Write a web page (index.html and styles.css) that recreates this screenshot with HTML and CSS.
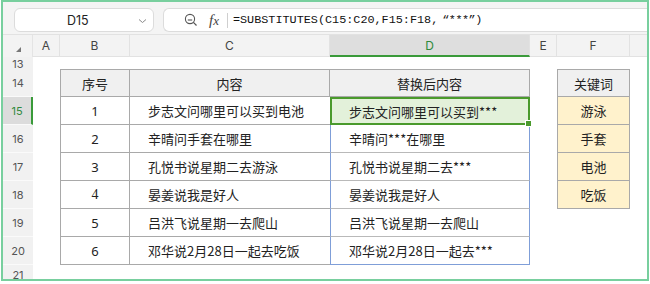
FILE: index.html
```html
<html>
  <head>
    <title>SUBSTITUTES</title>
    <link rel="stylesheet" href="styles.css">
  </head>
  <body>
    <div class="frame">
      <div class="toolbar">
        <div class="namebox">
          <span class="ref">D15</span>
          <svg class="chevron" width="9" height="6" viewBox="0 0 9 6">
            <path d="M1 1.5 L4.5 4.5 L8 1.5" fill="none" stroke="#8a8a8a" stroke-width="1"/>
          </svg>
        </div>
        <div class="formula">
          <svg class="zoomicon" width="14" height="14" viewBox="0 0 14 14">
            <circle cx="6" cy="6" r="4.6" fill="none" stroke="#555" stroke-width="1.1"/>
            <path d="M3.8 7 H8.2" stroke="#555" stroke-width="1.1"/>
            <path d="M9.4 9.4 L12.5 12.5" stroke="#555" stroke-width="1.2"/>
          </svg>
          <span class="fx">f<i>x</i></span>
          <span class="sep"></span>
          <span class="expr">=SUBSTITUTES(C15:C20,F15:F18,<span class="q">“***”</span>)</span>
        </div>
      </div>

      <div class="sheet">
        <div class="row colhead">
          <div class="corner"><span class="tri"></span></div>
          <div class="ch">A</div>
          <div class="ch">B</div>
          <div class="ch">C</div>
          <div class="ch active">D</div>
          <div class="ch">E</div>
          <div class="ch">F</div>
          <div class="ch last"></div>
        </div>

        <div class="row short">
          <div class="rh">13</div>
          <div></div><div></div><div></div><div></div><div></div><div></div><div></div>
        </div>

        <div class="row">
          <div class="rh">14</div>
          <div></div>
          <div class="cell th b top">序号</div>
          <div class="cell th top">内容</div>
          <div class="cell th top">替换后内容</div>
          <div></div>
          <div class="cell th f top">关键词</div>
          <div></div>
        </div>

        <div class="row">
          <div class="rh active">15</div>
          <div></div>
          <div class="cell num b">1</div>
          <div class="cell txt c">步志文问哪里可以买到电池</div>
          <div class="cell txt d sel">步志文问哪里可以买到***<span class="handle"></span></div>
          <div></div>
          <div class="cell key f">游泳</div>
          <div></div>
        </div>

        <div class="row">
          <div class="rh">16</div>
          <div></div>
          <div class="cell num b">2</div>
          <div class="cell txt c">辛晴问手套在哪里</div>
          <div class="cell txt d">辛晴问***在哪里</div>
          <div></div>
          <div class="cell key f">手套</div>
          <div></div>
        </div>

        <div class="row">
          <div class="rh">17</div>
          <div></div>
          <div class="cell num b">3</div>
          <div class="cell txt c">孔悦书说星期二去游泳</div>
          <div class="cell txt d">孔悦书说星期二去***</div>
          <div></div>
          <div class="cell key f">电池</div>
          <div></div>
        </div>

        <div class="row">
          <div class="rh">18</div>
          <div></div>
          <div class="cell num serif b">4</div>
          <div class="cell txt c">晏姜说我是好人</div>
          <div class="cell txt d">晏姜说我是好人</div>
          <div></div>
          <div class="cell key f">吃饭</div>
          <div></div>
        </div>

        <div class="row">
          <div class="rh">19</div>
          <div></div>
          <div class="cell num b">5</div>
          <div class="cell txt c">吕洪飞说星期一去爬山</div>
          <div class="cell txt d">吕洪飞说星期一去爬山</div>
          <div></div><div></div><div></div>
        </div>

        <div class="row">
          <div class="rh">20</div>
          <div></div>
          <div class="cell num b">6</div>
          <div class="cell txt c">邓华说2月28日一起去吃饭</div>
          <div class="cell txt d end">邓华说2月28日一起去***</div>
          <div></div><div></div><div></div>
        </div>

        <div class="row tail">
          <div class="rh">21</div>
          <div></div><div></div><div></div><div></div><div></div><div></div><div></div>
        </div>
      </div>
    </div>
  </body>
</html>
```

FILE: styles.css
```css
body {margin: 0; background: #fff; font-family: "Noto Sans CJK SC", "Noto Sans", sans-serif;}

.frame {
  margin-left: 1px;
  width: 648px;
  height: 281px;
  border: 2px solid #78cf9e;
  box-sizing: border-box;
  overflow: hidden;
  background: #fff;
}

/* name box + formula bar */
.toolbar {
  height: 33px;
  background: #f4f4f4;
  display: flex;
  align-items: center;
  gap: 9px;
  padding: 4px 0 0 11px;
  box-sizing: border-box;
  border-bottom: 1px solid #e2e2e2;
}
.namebox {
  width: 140px;
  height: 24px;
  background: #fff;
  border: 1px solid #dcdcdc;
  border-radius: 6px;
  box-sizing: border-box;
  display: flex;
  align-items: center;
  justify-content: space-between;
  padding: 0 6px 0 52px;
  font-family: Inter, "Noto Sans", sans-serif;
  font-size: 12.5px;
  color: #222;
}
.chevron {margin-top: 1px;}
.formula {
  flex: 1;
  height: 24px;
  background: #fff;
  border: 1px solid #dcdcdc;
  border-right: none;
  border-radius: 6px 0 0 6px;
  box-sizing: border-box;
  display: flex;
  align-items: center;
  padding-left: 20px;
}
.zoomicon {margin-right: 11px;}
.fx {font-family: "Liberation Serif", serif; font-style: italic; font-size: 15px; color: #444; margin-right: 8px;}
.fx i {font-size: 13px;}
.sep {width: 1px; height: 15px; background: #cfcfcf; margin-right: 5px;}
.expr {font-family: "Liberation Mono", monospace; font-size: 11.8px; color: #111;}
.expr .q {margin-left: 4px; letter-spacing: -0.5px;}

/* grid */
.row {
  display: grid;
  grid-template-columns: 30px 27px 70px 200px 200px 27px 73px 1fr;
  height: 28px;
}
.row.short {height: 12px;}
.row.tail {height: 20px;}
.row.colhead {height: 22px; background: #f3f3f3;}

.corner {position: relative; border-right: 1px solid #e4e4e4;}
.tri {
  position: absolute;
  right: 11px;
  bottom: 5px;
  width: 0;
  height: 0;
  border-left: 5px solid transparent;
  border-bottom: 5px solid #777;
}
.ch {
  display: flex;
  align-items: center;
  justify-content: center;
  font-family: Inter, "Noto Sans", sans-serif;
  font-size: 12px;
  color: #444;
  border-right: 1px solid #e2e2e2;
  border-bottom: 1px solid #e2e2e2;
}
.ch.last {border-right: none;}
.ch.active {background: #dedede; color: #2f8a3c; border-bottom: 2px solid #3a9a3a;}

.rh {
  background: #f1f1f1;
  border-bottom: 1px solid #fafafa;
  display: flex;
  align-items: center;
  justify-content: center;
  font-family: Inter, "Noto Sans", sans-serif;
  font-size: 11px;
  color: #555;
}
.rh.active {background: #dcdcdc; color: #2f8a3c; border-right: 2px solid #3a9a3a;}

/* table cells */
.cell {
  display: flex;
  align-items: center;
  font-size: 13px;
  color: #222;
  border-right: 1px solid #a9a9a9;
  border-bottom: 1px solid #a9a9a9;
  box-sizing: border-box;
}
.cell.top {border-top: 1px solid #a9a9a9;}
.cell.b, .cell.f {border-left: 1px solid #a9a9a9;}
.th {justify-content: center; background: #f0f0f0;}
.num {justify-content: center; font-family: "Noto Sans", sans-serif;}
.num.serif {font-family: "Liberation Serif", serif; font-size: 14px;}
.txt {padding-left: 18px; white-space: nowrap;}
.txt.c {border-right: none;}
.txt.d {border-left: 1px solid #7f9ed8; border-right: 1px solid #7f9ed8; border-bottom-color: #b9b9b9;}
.txt.d.end {border-bottom: 1px solid #7f9ed8;}
.txt.d.sel {
  position: relative;
  border: 2px solid #4a9a2c;
  background: #e3f1da;
  padding-left: 17px;
}
.handle {
  position: absolute;
  right: -4px;
  bottom: -4px;
  width: 5px;
  height: 5px;
  background: #4a9a2c;
  border: 1px solid #fff;
}
.key {justify-content: center; background: #fff2cc;}
```
